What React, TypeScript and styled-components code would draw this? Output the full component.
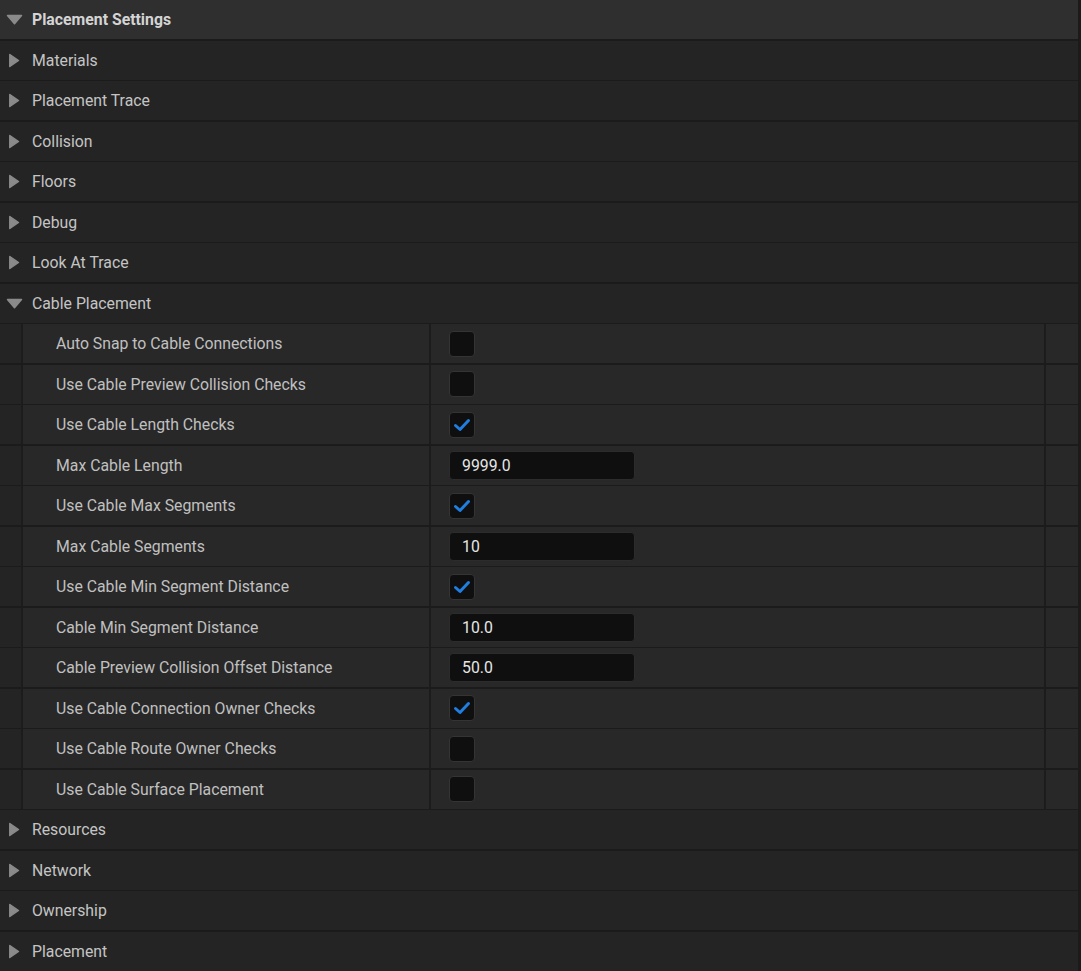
import React from "react";
import styled, { createGlobalStyle } from "styled-components";

const GlobalStyle = createGlobalStyle`
  html, body {
    margin: 0;
    padding: 0;
    background: #1a1a1a;
  }
  body {
    font-family: Roboto, "Noto Sans", "Liberation Sans", sans-serif;
    font-size: 15.8px;
  }
`;

const Panel = styled.div`
  width: 1081px;
  height: 971px;
  overflow: hidden;
  box-sizing: border-box;
  padding-right: 3px;
  background: #1b1b1b;
  display: flex;
  flex-direction: column;
  gap: 1.5px;
`;

const CategoryRow = styled.div<{ $header?: boolean }>`
  flex: 0 0 39px;
  height: 39px;
  display: flex;
  align-items: center;
  background: ${(p) => (p.$header ? "#2f2f2f" : "#242424")};
  color: ${(p) => (p.$header ? "#d4d4d4" : "#c4c4c4")};
  font-weight: ${(p) => (p.$header ? 700 : 400)};
`;

const Arrow = styled.span<{ $open?: boolean }>`
  width: 32px;
  height: 39px;
  box-sizing: border-box;
  padding-left: ${(p) => (p.$open ? 6 : 8)}px;
  display: flex;
  align-items: center;
  flex-shrink: 0;
  svg {
    display: block;
  }
`;

const PropertyRow = styled.div`
  flex: 0 0 39px;
  height: 39px;
  display: grid;
  grid-template-columns: 21px 406px 613px 32px;
  column-gap: 2px;
  background: #1c1c1c;
`;

const Indent = styled.div`
  background: #242424;
`;

const NameCell = styled.div`
  background: #282828;
  display: flex;
  align-items: center;
  padding-left: 33px;
  color: #c0c0c0;
  white-space: nowrap;
`;

const ValueCell = styled.div`
  background: #282828;
  display: flex;
  align-items: center;
  padding-left: 18px;
`;

const EndCell = styled.div`
  background: #282828;
`;

const Box = styled.div`
  width: 26px;
  height: 26px;
  box-sizing: border-box;
  border-radius: 4px;
  background: #0f0f0f;
  border: 1px solid #343434;
  display: flex;
  align-items: center;
  justify-content: center;
`;

const NumberInput = styled.div`
  width: 186px;
  height: 29px;
  box-sizing: border-box;
  border-radius: 4px;
  background: #0f0f0f;
  border: 1px solid #2c2c2c;
  display: flex;
  align-items: center;
  padding-left: 12px;
  color: #e6e6e6;
`;

const RightArrow = () => (
  <svg width="12" height="15" viewBox="0 0 12 15">
    <path d="M1.8 1.5 L10.5 7.5 L1.8 13.5 Z" fill="#8a8a8a" stroke="#8a8a8a" strokeWidth="1.5" strokeLinejoin="round" />
  </svg>
);

const DownArrow = () => (
  <svg width="17" height="11" viewBox="0 0 17 11">
    <path d="M1.5 1.5 L15.5 1.5 L8.5 9.8 Z" fill="#8a8a8a" stroke="#8a8a8a" strokeWidth="1.5" strokeLinejoin="round" />
  </svg>
);

const Check = () => (
  <svg width="20" height="20" viewBox="0 0 20 20">
    <path d="M3.5 10.5 L8 14.5 L16.5 5.5" fill="none" stroke="#1f7ee0" strokeWidth="3" strokeLinecap="round" strokeLinejoin="round" />
  </svg>
);

type Prop =
  | { name: string; kind: "bool"; checked: boolean }
  | { name: string; kind: "num"; value: string };

const cableProps: Prop[] = [
  { name: "Auto Snap to Cable Connections", kind: "bool", checked: false },
  { name: "Use Cable Preview Collision Checks", kind: "bool", checked: false },
  { name: "Use Cable Length Checks", kind: "bool", checked: true },
  { name: "Max Cable Length", kind: "num", value: "9999.0" },
  { name: "Use Cable Max Segments", kind: "bool", checked: true },
  { name: "Max Cable Segments", kind: "num", value: "10" },
  { name: "Use Cable Min Segment Distance", kind: "bool", checked: true },
  { name: "Cable Min Segment Distance", kind: "num", value: "10.0" },
  { name: "Cable Preview Collision Offset Distance", kind: "num", value: "50.0" },
  { name: "Use Cable Connection Owner Checks", kind: "bool", checked: true },
  { name: "Use Cable Route Owner Checks", kind: "bool", checked: false },
  { name: "Use Cable Surface Placement", kind: "bool", checked: false },
];

const before = ["Materials", "Placement Trace", "Collision", "Floors", "Debug", "Look At Trace"];
const after = ["Resources", "Network", "Ownership", "Placement"];

const Category: React.FC<{ label: string; open?: boolean; header?: boolean }> = ({ label, open, header }) => (
  <CategoryRow $header={header}>
    <Arrow $open={open}>{open ? <DownArrow /> : <RightArrow />}</Arrow>
    {label}
  </CategoryRow>
);

const Property: React.FC<{ prop: Prop }> = ({ prop }) => (
  <PropertyRow>
    <Indent />
    <NameCell>{prop.name}</NameCell>
    <ValueCell>
      {prop.kind === "bool" ? (
        <Box>{prop.checked && <Check />}</Box>
      ) : (
        <NumberInput>{prop.value}</NumberInput>
      )}
    </ValueCell>
    <EndCell />
  </PropertyRow>
);

const App: React.FC = () => {
  return (
    <>
      <GlobalStyle />
      <Panel>
        <Category label="Placement Settings" open header />
        {before.map((c) => (
          <Category key={c} label={c} />
        ))}
        <Category label="Cable Placement" open />
        {cableProps.map((p) => (
          <Property key={p.name} prop={p} />
        ))}
        {after.map((c) => (
          <Category key={c} label={c} />
        ))}
      </Panel>
    </>
  );
};

export default App;
